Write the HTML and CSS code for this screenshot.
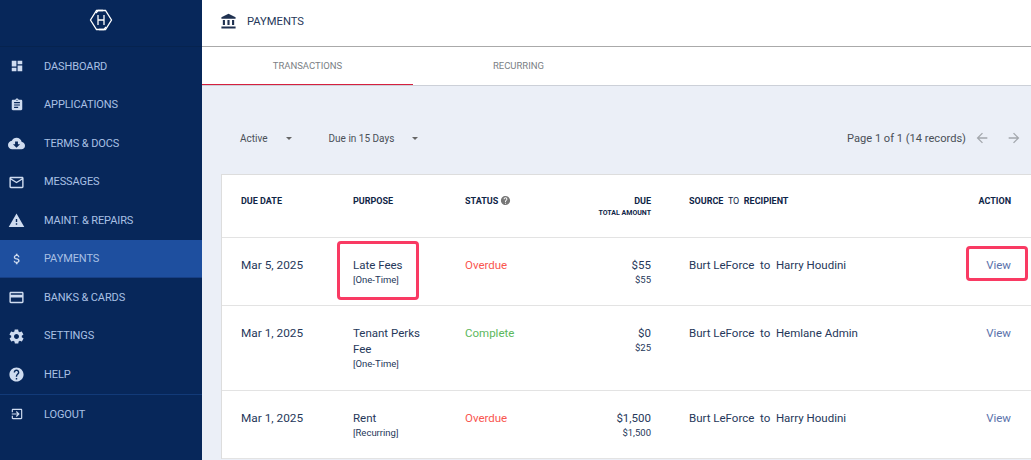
FILE: index.html
```html
<!DOCTYPE html>
<html lang="en">
<head>
    <meta charset="UTF-8">
    <meta name="viewport" content="width=device-width, initial-scale=1.0">
    <title>Payments</title>
    <link rel="stylesheet" href="styles.css">
</head>
<body>
    <nav class="sidebar">
        <div class="logo">
            <svg width="24" height="22" viewBox="0 0 24 22" fill="none" stroke="#fff" stroke-width="1.300">
                <path d="M14 1.500H7.500L1.500 11l6 9.500H15l2-2.500"/>
                <path d="M10 20.500h6.500l6-9.500-6-9.500H9L7 4"/>
                <path d="M9 6v10M15 6v10M9 11h6"/>
            </svg>
        </div>
        <ul>
            <li><a href="#"><svg class="icon" viewBox="0 0 24 24"><path d="M3 13h8V3H3zm0 8h8v-6H3zm10 0h8V11h-8zm0-18v6h8V3z"/></svg>DASHBOARD</a></li>
            <li><a href="#"><svg class="icon" viewBox="0 0 24 24"><path d="M19 3h-4.200C14.400 1.800 13.300 1 12 1s-2.400.8-2.800 2H5c-1.100 0-2 .9-2 2v14c0 1.100.9 2 2 2h14c1.100 0 2-.9 2-2V5c0-1.100-.9-2-2-2zm-7 0c.6 0 1 .4 1 1s-.4 1-1 1-1-.4-1-1 .4-1 1-1zm2 14H7v-2h7zm3-4H7v-2h10zm0-4H7V7h10z"/></svg>APPLICATIONS</a></li>
            <li><a href="#"><svg class="icon wide" viewBox="0 0 24 24"><path d="M19.400 10C18.700 6.600 15.700 4 12 4 9.100 4 6.600 5.600 5.400 8 2.300 8.400 0 10.900 0 14c0 3.300 2.700 6 6 6h13c2.800 0 5-2.200 5-5 0-2.600-2.100-4.800-4.600-5zM17 13l-5 5-5-5h3V9h4v4z"/></svg>TERMS &amp; DOCS</a></li>
            <li><a href="#"><svg class="icon wide" viewBox="0 0 24 24"><path d="M20 4H4c-1.100 0-2 .9-2 2v12c0 1.100.9 2 2 2h16c1.100 0 2-.9 2-2V6c0-1.100-.9-2-2-2zm0 14H4V8l8 5 8-5zm-8-7L4 6h16z"/></svg>MESSAGES</a></li>
            <li><a href="#"><svg class="icon wide" viewBox="0 0 24 24"><path d="M1 21h22L12 2zm12-3h-2v-2h2zm0-4h-2v-4h2z"/></svg>MAINT. &amp; REPAIRS</a></li>
            <li><a href="#" class="active"><svg class="icon" viewBox="0 0 24 24"><path d="M11.800 10.900c-2.300-.6-3-1.200-3-2.100 0-1.100 1-1.900 2.700-1.900 1.800 0 2.400.8 2.500 2.100h2.200c-.1-1.700-1.100-3.300-3.200-3.800V3h-3v2.200c-1.900.4-3.500 1.700-3.500 3.600 0 2.300 1.900 3.400 4.600 4.100 2.400.6 2.900 1.400 2.900 2.300 0 .7-.5 1.700-2.700 1.700-2 0-2.800-.9-2.900-2.100H6.200c.1 2.200 1.800 3.400 3.800 3.800V21h3v-2.200c1.900-.4 3.500-1.500 3.500-3.600 0-2.800-2.400-3.800-4.700-4.300z"/></svg>PAYMENTS</a></li>
            <li><a href="#"><svg class="icon wide" viewBox="0 0 24 24"><path d="M20 4H4c-1.100 0-2 .9-2 2v12c0 1.100.9 2 2 2h16c1.100 0 2-.9 2-2V6c0-1.100-.9-2-2-2zm0 14H4v-6h16zm0-10H4V6h16z"/></svg>BANKS &amp; CARDS</a></li>
            <li><a href="#"><svg class="icon wide" viewBox="0 0 24 24"><path d="M19.400 13c0-.3.100-.6.100-1s0-.7-.1-1l2.100-1.600c.2-.2.200-.4.100-.6l-2-3.500c-.1-.2-.4-.3-.6-.2l-2.500 1c-.5-.4-1.100-.7-1.700-1l-.4-2.600c0-.3-.2-.5-.5-.5h-4c-.3 0-.5.200-.5.400l-.4 2.700c-.6.200-1.100.6-1.700 1l-2.500-1c-.2-.1-.5 0-.6.200l-2 3.500c-.1.200-.1.500.1.600L4.600 11c0 .3-.1.600-.1 1s0 .7.100 1l-2.100 1.600c-.2.200-.2.400-.1.600l2 3.500c.1.200.4.300.6.200l2.500-1c.5.400 1.100.7 1.700 1l.4 2.600c0 .3.200.5.500.5h4c.3 0 .5-.2.500-.4l.4-2.700c.6-.2 1.100-.6 1.700-1l2.500 1c.2.100.5 0 .6-.2l2-3.500c.1-.2.100-.5-.1-.6zM12 15.500c-1.900 0-3.500-1.600-3.500-3.500s1.600-3.500 3.500-3.500 3.500 1.600 3.500 3.500-1.600 3.500-3.500 3.500z"/></svg>SETTINGS</a></li>
            <li class="last"><a href="#"><svg class="icon wide" viewBox="0 0 24 24"><path d="M12 2C6.500 2 2 6.500 2 12s4.500 10 10 10 10-4.500 10-10S17.500 2 12 2zm1 17h-2v-2h2zm2.100-7.700-.9.900c-.7.700-1.200 1.300-1.200 2.800h-2v-.5c0-1.100.5-2.100 1.200-2.800l1.200-1.300c.4-.3.600-.8.600-1.400 0-1.100-.9-2-2-2s-2 .9-2 2H8c0-2.200 1.800-4 4-4s4 1.800 4 4c0 .9-.4 1.700-.9 2.300z"/></svg>HELP</a></li>
            <li><a href="#"><svg class="icon" viewBox="0 0 24 24"><path d="M10.100 15.600 11.500 17l5-5-5-5-1.400 1.400 2.600 2.600H3v2h9.700zM19 3H5c-1.100 0-2 .9-2 2v4h2V5h14v14H5v-4H3v4c0 1.100.9 2 2 2h14c1.100 0 2-.9 2-2V5c0-1.100-.9-2-2-2z"/></svg>LOGOUT</a></li>
        </ul>
    </nav>

    <main class="content">
        <header class="topbar">
            <svg class="bank" viewBox="0 0 24 24"><path d="M4 10v7h3v-7zm6.500 0v7h3v-7zM2 22h20v-3H2zm15-12v7h3v-7zM12 1 2 6v2h20V6z"/></svg>
            <h1>PAYMENTS</h1>
        </header>
        <div class="tabs">
            <a href="#" class="tab active">TRANSACTIONS</a>
            <a href="#" class="tab">RECURRING</a>
        </div>

        <div class="filters">
            <div class="select select-status">Active<span class="caret"></span></div>
            <div class="select">Due in 15 Days<span class="caret"></span></div>
            <div class="pager">
                <span>Page 1 of 1 (14 records)</span>
                <svg viewBox="0 0 24 24"><path d="M20 11H7.800l5.600-5.600L12 4l-8 8 8 8 1.400-1.400L7.800 13H20z"/></svg>
                <svg viewBox="0 0 24 24"><path d="m12 4-1.400 1.400 5.600 5.600H4v2h12.200l-5.600 5.600L12 20l8-8z"/></svg>
            </div>
        </div>

        <table class="payments">
            <thead>
                <tr>
                    <th class="col-date">DUE DATE</th>
                    <th class="col-purpose">PURPOSE</th>
                    <th class="col-status">STATUS <svg class="hint" viewBox="0 0 24 24"><path d="M12 2C6.500 2 2 6.500 2 12s4.500 10 10 10 10-4.500 10-10S17.500 2 12 2zm1 17h-2v-2h2zm2.100-7.700-.9.900c-.7.700-1.200 1.300-1.200 2.800h-2v-.5c0-1.100.5-2.100 1.200-2.800l1.200-1.300c.4-.3.600-.8.600-1.400 0-1.100-.9-2-2-2s-2 .9-2 2H8c0-2.200 1.800-4 4-4s4 1.800 4 4c0 .9-.4 1.700-.9 2.300z"/></svg></th>
                    <th class="col-due">DUE<small>TOTAL AMOUNT</small></th>
                    <th class="col-party">SOURCE &nbsp;<span class="to">TO</span>&nbsp; RECIPIENT</th>
                    <th class="col-action">ACTION</th>
                </tr>
            </thead>
            <tbody>
                <tr class="row-short">
                    <td class="cell-date">Mar 5, 2025</td>
                    <td class="flagged">Late Fees<small>[One-Time]</small><span class="flag flag-purpose"></span></td>
                    <td class="overdue">Overdue</td>
                    <td class="col-due">$55<small>$55</small></td>
                    <td class="col-party">Burt LeForce &nbsp;to&nbsp; Harry Houdini</td>
                    <td class="col-action flagged"><a href="#">View</a><span class="flag flag-view"></span></td>
                </tr>
                <tr class="row-tall">
                    <td class="cell-date">Mar 1, 2025</td>
                    <td>Tenant Perks Fee<small>[One-Time]</small></td>
                    <td class="complete">Complete</td>
                    <td class="col-due">$0<small>$25</small></td>
                    <td class="col-party">Burt LeForce &nbsp;to&nbsp; Hemlane Admin</td>
                    <td class="col-action"><a href="#">View</a></td>
                </tr>
                <tr class="row-short">
                    <td class="cell-date">Mar 1, 2025</td>
                    <td>Rent<small>[Recurring]</small></td>
                    <td class="overdue">Overdue</td>
                    <td class="col-due">$1,500<small>$1,500</small></td>
                    <td class="col-party">Burt LeForce &nbsp;to&nbsp; Harry Houdini</td>
                    <td class="col-action"><a href="#">View</a></td>
                </tr>
            </tbody>
        </table>
    </main>
</body>
</html>
```

FILE: styles.css
```css
* {
    margin: 0;
    padding: 0;
    box-sizing: border-box;
}

html, body {
    height: 100%;
    overflow: hidden;
}

body {
    display: flex;
    font-family: Roboto, "Liberation Sans", sans-serif;
    background: #ebeff7;
    color: #1f3150;
}

a {
    text-decoration: none;
}

.sidebar {
    flex: 0 0 202px;
    height: 460px;
    background: #07275a;
}

.logo {
    height: 47px;
    display: flex;
    align-items: center;
    justify-content: center;
    padding-bottom: 6px;
    border-bottom: 1px solid #06234f;
}

.sidebar ul {
    list-style: none;
}

.sidebar a {
    display: flex;
    align-items: center;
    height: 38.500px;
    padding-left: 44px;
    position: relative;
    color: #a9c0e4;
    font-size: 11px;
    letter-spacing: -0.1px;
}

.sidebar a.active {
    background: #1e4f9f;
    border-bottom: 1px solid #173f85;
}

.sidebar li.last {
    border-bottom: 1px solid #123a78;
    height: 40px;
}

.icon {
    position: absolute;
    left: 10px;
    top: 12px;
    width: 14px;
    height: 14px;
    fill: #cfdcf0;
}

.icon.wide {
    left: 8px;
    width: 17px;
    height: 17px;
    top: 11px;
}

.content {
    flex: 1;
    min-width: 0;
}

.topbar {
    height: 47px;
    background: #fff;
    border-bottom: 1px solid #aaa;
    display: flex;
    align-items: center;
    padding-left: 18px;
    padding-bottom: 4px;
}

.bank {
    width: 17px;
    height: 17px;
    fill: #1f3150;
    margin-right: 10px;
}

.topbar h1 {
    font-size: 11.200px;
    font-weight: 400;
    color: #26385a;
}

.tabs {
    height: 39px;
    display: flex;
    background: #fff;
    border-bottom: 1px solid #ccd0d8;
}

.tab {
    width: 211px;
    height: 38px;
    display: flex;
    align-items: center;
    justify-content: center;
    padding-bottom: 1px;
    color: #7b7f85;
    font-size: 9.500px;
}

.tab.active {
    border-bottom: 1px solid #d6203f;
}

.filters {
    height: 88px;
    display: flex;
    align-items: center;
    padding: 16px 9px 0 38px;
    font-size: 10px;
    color: #4a4f57;
}

.select {
    display: flex;
    align-items: center;
}

.select-status {
    margin-right: 37px;
}

.caret {
    margin-left: 18px;
    border-left: 3.500px solid transparent;
    border-right: 3.500px solid transparent;
    border-top: 3.500px solid #666;
}

.pager {
    margin-left: auto;
    display: flex;
    align-items: center;
    font-size: 11.100px;
}

.pager svg {
    width: 16px;
    height: 16px;
    fill: #a3a7ad;
    margin-left: 16px;
}

.pager svg:first-of-type {
    margin-left: 8px;
}

.payments {
    margin-left: 19px;
    width: 810px;
    background: #fff;
    border-collapse: separate;
    border-spacing: 0;
    table-layout: fixed;
    border-top: 1px solid #ddd;
    border-left: 1px solid #ddd;
    font-size: 11.500px;
    color: #26385a;
}

.payments th {
    height: 63px;
    padding: 20px 0 0 19px;
    vertical-align: top;
    text-align: left;
    font-size: 9px;
    font-weight: 700;
    color: #0f2547;
    line-height: 12px;
    border-bottom: 1px solid #e3e3e3;
}

.payments td {
    padding: 19px 20px 0 19px;
    vertical-align: top;
    line-height: 16px;
    border-bottom: 1px solid #e3e3e3;
}

.row-short { height: 68px; }
.row-tall { height: 85px; }

.payments .cell-date {
    font-size: 11.800px;
    padding-right: 0;
}

.payments small {
    display: block;
    font-size: 9.500px;
    line-height: 14px;
}

.col-date { width: 112px; }
.col-purpose { width: 112px; }
.col-status { width: 100px; }

.payments .col-party {
    width: 324px;
    padding-left: 38px;
    padding-right: 0;
}

.payments .col-due {
    width: 105px;
    text-align: right;
    padding-left: 0;
    padding-right: 0;
}

.payments th.col-due small {
    font-size: 7px;
    line-height: 12px;
}

.payments .col-action {
    text-align: right;
    padding-right: 20px;
    padding-left: 0;
}

.col-action a {
    color: #5b72ab;
}

.to {
    font-weight: 400;
}

.hint {
    width: 11px;
    height: 11px;
    fill: #777;
    vertical-align: -2px;
}

.overdue { color: #f9564f; }
.complete { color: #5cb85c; }

.flagged {
    position: relative;
}

.flag {
    position: absolute;
    border: 3px solid #f93a63;
    border-radius: 4px;
}

.flag-purpose {
    left: 3px;
    top: 3px;
    width: 82px;
    height: 59px;
}

.flag-view {
    right: 3px;
    top: 8px;
    width: 62px;
    height: 35px;
}
```
